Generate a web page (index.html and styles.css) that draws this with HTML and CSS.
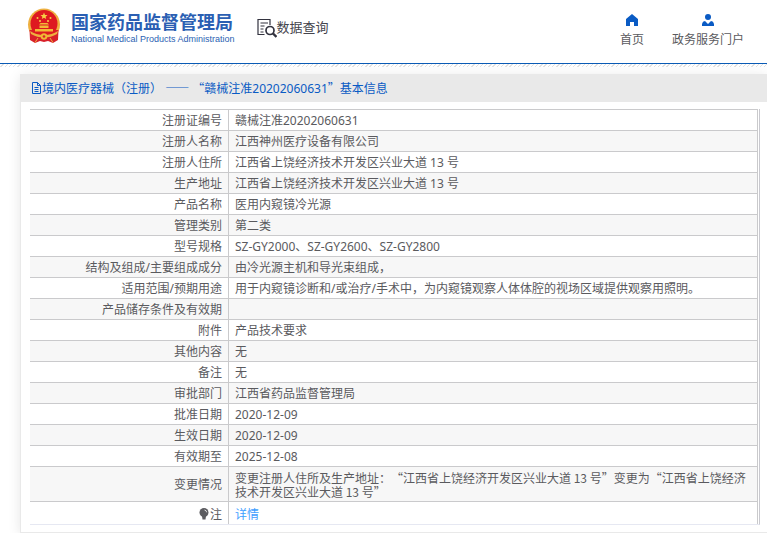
FILE: index.html
```html
<!DOCTYPE html>
<html lang="zh-CN">
<head>
<meta charset="utf-8">
<meta name="viewport" content="width=device-width, initial-scale=1">
<title>数据查询</title>
<link rel="stylesheet" href="styles.css">
</head>
<body>
<header class="site-header">
  <a class="brand" href="#">
    <svg class="emblem" viewBox="0 0 34 36" aria-hidden="true">
      <circle cx="17" cy="16.500" r="16" fill="#eeb040"/>
      <path d="M2.500 22 3 32l5 3 5-2 4 1 4-1 5 2 5-3 .5-10z" fill="#d8202a"/>
      <circle cx="17" cy="15.500" r="13.500" fill="#de1920"/>
      <path d="m17 4.500 1 2.400 2.500.2-1.900 1.600.6 2.400-2.200-1.300-2.200 1.300.6-2.400-1.900-1.600 2.500-.2z" fill="#f7cf46"/>
      <g fill="#f7cf46"><circle cx="10.500" cy="10" r="1"/><circle cx="13" cy="13" r="1"/><circle cx="21" cy="13" r="1"/><circle cx="23.500" cy="10" r="1"/></g>
      <path d="M12 16.500 13.500 15h7l1.500 1.500zM12.500 17.500h9V20h-9zM8 21h18v2.500H8z" fill="#f2b936"/>
      <path d="M3 23q6 4 14 4t14-4l-1 3q-6 3.500-13 3.500T4 26z" fill="#eeb040"/>
      <circle cx="17" cy="28.500" r="3.200" fill="#f0b833"/>
      <circle cx="17" cy="28.500" r="1.300" fill="#d8202a"/>
      <path d="M8 34.500 11 30M26 34.500 23 30" fill="none" stroke="#eeb040"/>
    </svg>
    <span class="brand-text">
      <span class="brand-name">国家药品监督管理局</span>
      <span class="brand-en">National Medical Products Administration</span>
    </span>
  </a>
  <a class="search-title" href="#">
    <svg class="search-icon" viewBox="0 0 20 20" fill="none" stroke="#33333f" aria-hidden="true">
      <path d="M7.500 16.500H1V1.500h12V7M3.500 5h7.500M3.500 8h4M3.500 11h3M3.500 14h3" stroke-width="1.200"/>
      <circle cx="13" cy="12.500" r="4" stroke-width="1.700"/>
      <path d="m16 15.500 3.500 3.500" stroke-width="2.400"/>
    </svg>
    <span>数据查询</span>
  </a>
  <nav class="top-nav">
    <a href="#">
      <svg class="nav-icon" viewBox="0 0 14 14" aria-hidden="true"><path d="M7 1 1 6v7h4V9h4v4h4V6z" fill="#0a5bc4"/></svg>
      <span>首页</span>
    </a>
    <a href="#">
      <svg class="nav-icon" viewBox="0 0 14 14" aria-hidden="true"><circle cx="7" cy="4" r="3" fill="#0a5bc4"/><path d="M1 13v-2Q1.500 8.200 4 8l3 3 3-3q2.500.2 3 3v2z" fill="#0a5bc4"/></svg>
      <span>政务服务门户</span>
    </a>
  </nav>
</header>
<div class="hatch"></div>
<main class="card">
  <h1 class="card-title">
    <svg class="doc-icon" viewBox="0 0 11 12" fill="none" stroke="#0a5bc4" aria-hidden="true"><path d="M1.500.5h5l3 3v8h-8zM6.500.5v3h3M3.500 5.500h4M3.500 7.500h4M3.500 9.500h4"/></svg>
    <span>境内医疗器械（注册） <span class="cjk">——</span> <span class="cjk">“</span>赣械注准20202060631<span class="cjk">”</span>基本信息</span>
  </h1>
  <table class="info">
    <tbody>
      <tr><th scope="row">注册证编号</th><td>赣械注准20202060631</td></tr>
      <tr><th scope="row">注册人名称</th><td>江西神州医疗设备有限公司</td></tr>
      <tr><th scope="row">注册人住所</th><td>江西省上饶经济技术开发区兴业大道 13 号</td></tr>
      <tr><th scope="row">生产地址</th><td>江西省上饶经济技术开发区兴业大道 13 号</td></tr>
      <tr><th scope="row">产品名称</th><td>医用内窥镜冷光源</td></tr>
      <tr><th scope="row">管理类别</th><td>第二类</td></tr>
      <tr><th scope="row">型号规格</th><td>SZ-GY2000、SZ-GY2600、SZ-GY2800</td></tr>
      <tr><th scope="row">结构及组成/主要组成成分</th><td>由冷光源主机和导光束组成，</td></tr>
      <tr><th scope="row">适用范围/预期用途</th><td>用于内窥镜诊断和/或治疗/手术中，为内窥镜观察人体体腔的视场区域提供观察用照明。</td></tr>
      <tr><th scope="row">产品储存条件及有效期</th><td></td></tr>
      <tr><th scope="row">附件</th><td>产品技术要求</td></tr>
      <tr><th scope="row">其他内容</th><td>无</td></tr>
      <tr><th scope="row">备注</th><td>无</td></tr>
      <tr><th scope="row">审批部门</th><td>江西省药品监督管理局</td></tr>
      <tr><th scope="row">批准日期</th><td>2020-12-09</td></tr>
      <tr><th scope="row">生效日期</th><td>2020-12-09</td></tr>
      <tr><th scope="row">有效期至</th><td>2025-12-08</td></tr>
      <tr><th scope="row">变更情况</th><td class="long-text">变更注册人住所及生产地址：“江西省上饶经济开发区兴业大道 13 号”变更为“江西省上饶经济技术开发区兴业大道 13 号”</td></tr>
      <tr class="note"><th scope="row"><svg class="bulb" viewBox="0 0 10 12" aria-hidden="true"><circle cx="5" cy="4.500" r="4.500" fill="#5c5c60"/><path d="M3 8h4l-.5 3.500h-3z" fill="#5c5c60"/><path d="M5.500 2q2 .3 2.200 2.300" fill="none" stroke="#fff" stroke-width=".8"/></svg>注</th><td><a href="#">详情</a></td></tr>
    </tbody>
  </table>
</main>
</body>
</html>
```
FILE: styles.css
```css
* {
  box-sizing: border-box;
}

body {
  margin: 0;
  background: #fff;
  color: #5a5a5e;
  font: 12px/14px "Noto Sans", "Noto Sans CJK SC", sans-serif;
  text-spacing-trim: space-all;
}

a {
  color: inherit;
  text-decoration: none;
}

svg {
  display: block;
  flex: none;
}

.cjk,
.info .long-text {
  font-family: "Noto Sans CJK SC", sans-serif;
}

.site-header {
  display: flex;
  align-items: flex-start;
  height: 64px;
  padding: 8px 23px 0 27px;
  border-bottom: 1px solid #0a5bb5;
}

.brand {
  display: flex;
  gap: 10px;
  color: #2b5fb3;
}

.emblem {
  width: 34px;
  height: 36px;
}

.brand-text {
  display: flex;
  flex-direction: column;
  padding-top: 4px;
}

.brand-name {
  font-size: 18px;
  font-weight: 700;
  line-height: 20px;
}

.brand-en {
  font-family: "Liberation Sans", sans-serif;
  font-size: 9px;
  line-height: 14px;
}

.search-title {
  display: flex;
  margin: 10px 0 0 22px;
  color: #44444c;
  font-size: 13px;
  line-height: 18px;
}

.search-icon {
  width: 20px;
  height: 20px;
}

.top-nav {
  display: flex;
  gap: 28px;
  margin: 5px 0 0 auto;
}

.top-nav a {
  display: flex;
  flex-direction: column;
  align-items: center;
  gap: 6px;
}

.nav-icon {
  width: 14px;
  height: 14px;
}

.hatch {
  height: 3px;
  background: repeating-linear-gradient(135deg, #fff 0 2px, #e2e2e2 2px 3px);
}

.card {
  margin: 7px 0 0 20px;
  padding-bottom: 7px;
  border: 1px solid #e9e9e9;
  border-width: 0 0 1px 1px;
  box-shadow: 0 2px 12px rgba(0, 0, 0, 0.1);
}

.card-title {
  display: flex;
  align-items: center;
  height: 28px;
  margin: 0 0 7px;
  padding-left: 10px;
  background: #e9e9e9;
  color: #0a5bc4;
  font-size: 12px;
  font-weight: 400;
}

.doc-icon {
  width: 11px;
  height: 12px;
}

.info {
  width: calc(100% - 16px);
  margin: 0 7px 0 9px;
  border-spacing: 0;
  border-right: 1px solid #c9c9cf;
  border-bottom: 1px solid #e6e8f2;
  padding-right: 1px;
}

.info th,
.info td {
  padding: 4px 6px 2px;
  border-top: 1px solid #cacacc;
  border-right: 1px solid #cacacc;
  font-weight: 400;
}

.info th {
  width: 199px;
  text-align: right;
}

.info td {
  text-align: left;
}

.info tr:nth-child(even) {
  background: #f7f7f7;
}

.info .note th,
.info .note td {
  height: 23px;
  padding-top: 6px;
}

.info td a {
  color: #409eff;
}

.bulb {
  display: inline-block;
  width: 10px;
  height: 12px;
  margin-right: 1px;
  vertical-align: -1px;
}
```
